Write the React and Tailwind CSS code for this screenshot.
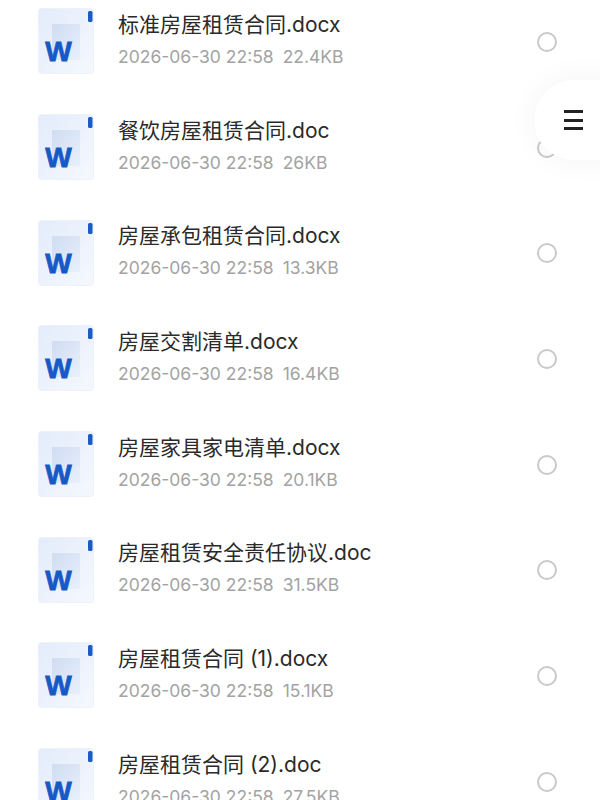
import React from 'react';

const FILES = [
  { name: '标准房屋租赁合同.docx', size: '22.4KB' },
  { name: '餐饮房屋租赁合同.doc', size: '26KB' },
  { name: '房屋承包租赁合同.docx', size: '13.3KB' },
  { name: '房屋交割清单.docx', size: '16.4KB' },
  { name: '房屋家具家电清单.docx', size: '20.1KB' },
  { name: '房屋租赁安全责任协议.doc', size: '31.5KB' },
  { name: '房屋租赁合同 (1).docx', size: '15.1KB' },
  { name: '房屋租赁合同 (2).doc', size: '27.5KB' },
];

function WordIcon() {
  return (
    <svg className="w-[56px] h-[66px] shrink-0" viewBox="0 0 56 66" fill="none" aria-hidden="true">
      <defs>
        <linearGradient id="sheet" x1="0" y1="0" x2="1" y2="1">
          <stop offset="0" stopColor="#e3ecfb" />
          <stop offset="1" stopColor="#f5f8fe" />
        </linearGradient>
        <linearGradient id="inner" x1="0" y1="0" x2="1" y2="1">
          <stop offset="0" stopColor="#cfdcf2" />
          <stop offset="1" stopColor="#e9f0fb" />
        </linearGradient>
      </defs>
      <rect x="0.5" y="0.5" width="55" height="65" rx="3" fill="url(#sheet)" stroke="#edf1f8" />
      <rect x="14" y="16" width="28" height="36" fill="url(#inner)" />
      <rect x="50" y="3" width="4.5" height="11" rx="1.5" fill="#1a5bc4" />
      <text x="20.5" y="53" textAnchor="middle" fill="#1659c6" stroke="#1659c6" strokeWidth="0.8" fontSize="28" fontWeight="700" fontFamily="'Liberation Sans', sans-serif">W</text>
    </svg>
  );
}

function FileRow({ file }) {
  return (
    <div className="h-[105.7px] shrink-0 flex items-center pl-[38px] pr-[43px]">
      <WordIcon />
      <div className="ml-[24px] flex-1 min-w-0 mt-[-2px]">
        <div className="text-[21px] leading-[28px] text-[#2a2a2a] whitespace-nowrap">{file.name}</div>
        <div className="mt-[5px] text-[17.5px] leading-[26px] text-[#a3a3a3] whitespace-nowrap">
          <span>2026-06-30 22:58</span>
          <span className="ml-[9px]">{file.size}</span>
        </div>
      </div>
      <div className="w-[20px] h-[20px] mt-[1px] rounded-full border-2 border-[#c9c9c9] shrink-0" />
    </div>
  );
}

export default function App() {
  return (
    <div className="relative w-[600px] h-[800px] overflow-hidden bg-white font-['Inter','Noto_Sans_CJK_SC',sans-serif]">
      <div className="flex flex-col mt-[-11.5px]">
        {FILES.map((file) => (
          <FileRow key={file.name} file={file} />
        ))}
      </div>

      <div className="absolute left-[534px] top-[80px] w-[90px] h-[80px] rounded-l-[40px] bg-white shadow-[0_0_30px_rgba(0,0,0,0.05)] pl-[30px] flex flex-col justify-center gap-[5.5px]">
        <span className="block w-[19px] h-[3px] bg-[#222]" />
        <span className="block w-[19px] h-[3px] bg-[#222]" />
        <span className="block w-[19px] h-[3px] bg-[#222]" />
      </div>
    </div>
  );
}
